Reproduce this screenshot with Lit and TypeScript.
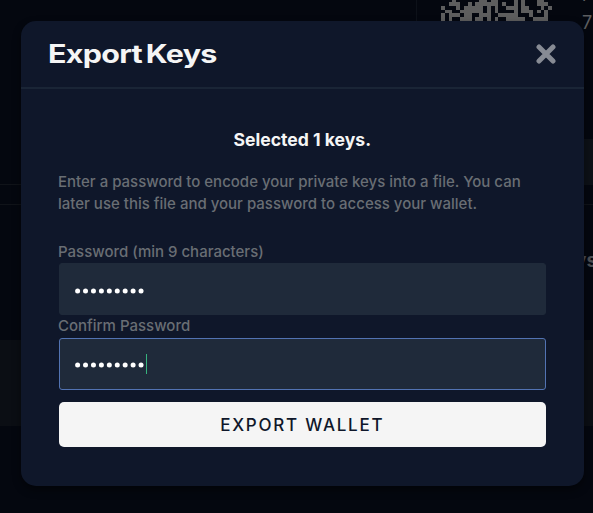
import { LitElement, html, css, svg } from "lit";
import { customElement } from "lit/decorators.js";

// Visible modules of the address QR code, one string per row.
const QR_ROWS = [
  "...#......##.##....#.#...##..",
  "..###..#.######.#..#.#...###.",
  "#...#.#####.#.#..###.##...#.#",
  ".##..######.#.#....#.###.#.#.",
  "#.###.##..###..#####...#...#.",
  "#.#..###.##.#.#..#####..####.",
];

@customElement("app-root")
export class AppRoot extends LitElement {
  static styles = css`
    :host { display: block; position: relative; width: 593px; height: 513px; overflow: hidden;
      background: #04070f; font-family: Inter, sans-serif; }
    * { box-sizing: border-box; }
    .behind { position: absolute; inset: 0; }
    .line { position: absolute; left: 0; right: 0; height: 1px; background: #101319; }
    .l1 { top: 184px; } .l2 { top: 204px; }
    .rule { position: absolute; left: 416px; top: 0; width: 1px; height: 184px; background: #0d1119; }
    .band { position: absolute; left: 0; right: 0; top: 340px; height: 86px; background: #0b0e14; }
    .chip { position: absolute; left: 560px; right: 0; top: 139px; height: 46px; background: #0d1117; }
    .qr { position: absolute; left: 441px; top: -2px; }
    .amount { position: absolute; left: 582px; font-size: 18px; line-height: 20px; color: #5c5d60; }
    .a1 { top: -15px; } .a2 { top: 13px; }
    .side { position: absolute; left: 575px; top: 250px; font-size: 19px; line-height: 22px; font-weight: 700; color: #4c4f54; }
    .dialog { position: absolute; left: 21px; top: 21px; width: 563px; height: 464.5px; border-radius: 15px;
      background: #0f172a; box-shadow: 0 4px 9px rgba(0,0,0,.45); }
    header { display: flex; align-items: center; justify-content: space-between; height: 68px;
      border-bottom: 2px solid #1a2536; padding: 0 28px 0 27px; }
    h1 { margin: 0; font-size: 25px; line-height: 30px; font-weight: 700; color: #f5f5f5; word-spacing: -2.2px;
      letter-spacing: -0.6px; transform: scaleX(1.22); transform-origin: left; white-space: nowrap; }
    .close { display: block; margin-top: -1px; }
    .body { display: flex; flex-direction: column; padding: 39px 38px 0 37.5px; }
    .count { margin: 0 0 19px; text-align: center; font-size: 17.6px; line-height: 24px; font-weight: 700; color: #f5f5f5; }
    .hint { margin: 0 0 26px -0.5px; font-size: 15px; line-height: 22px; font-weight: 500; color: #696e74; white-space: nowrap; }
    label { margin-left: -0.5px; font-size: 15px; line-height: 22px; font-weight: 500; color: #696e74; }
    .field { display: flex; align-items: center; height: 52px; padding: 4px 16px 0 15.5px; border-radius: 3px;
      border: 1px solid #1f2a3a; background: #1f2a3a; }
    .focused { border-color: #5273b3; margin-top: 1px; padding-top: 0; }
    .focused .dots { margin-top: 2px; }
    .caret { width: 1px; height: 20px; background: #36b37e; }
    button { margin-top: 12px; height: 45px; border: 0; border-radius: 5px; background: #f5f5f5; color: #0f172a;
      font: 500 17px/24px Inter, sans-serif; letter-spacing: 1.75px; padding: 0; }
  `;

  private qr() {
    return html`<svg class="qr" width="111" height="23" viewBox="0 0 29 6" preserveAspectRatio="none" shape-rendering="crispEdges">
      ${QR_ROWS.flatMap((row, y) => [...row].map((c, x) =>
        c === "#" ? svg`<rect x=${x} y=${y} width="1" height="1" fill="#5e5e5e"></rect>` : null))}
    </svg>`;
  }

  private dots() {
    return html`<svg class="dots" width="71" height="8" viewBox="0 0 71 8">
      ${Array.from({ length: 9 }, (_, i) => svg`<circle cx=${2.6 + i * 7.93} cy="4" r="2.5" fill="#fff"></circle>`)}
    </svg>`;
  }

  render() {
    return html`
      <div class="behind">
        <div class="rule"></div><div class="line l1"></div><div class="line l2"></div>
        <div class="band"></div><div class="chip"></div>
        ${this.qr()}
        <span class="amount a1">r</span><span class="amount a2">7</span>
        <span class="side">ys</span>
      </div>
      <section class="dialog">
        <header>
          <h1>Export Keys</h1>
          <svg class="close" width="20" height="20" viewBox="0 0 20 20">
            <path d="M3 3L17 17M17 3L3 17" stroke="#878b94" stroke-width="5" stroke-linecap="round"></path>
          </svg>
        </header>
        <div class="body">
          <p class="count">Selected 1 keys.</p>
          <p class="hint">Enter a password to encode your private keys into a file. You can<br>later use this file and your password to access your wallet.</p>
          <label>Password (min 9 characters)</label>
          <div class="field">${this.dots()}</div>
          <label>Confirm Password</label>
          <div class="field focused">${this.dots()}<span class="caret"></span></div>
          <button>EXPORT WALLET</button>
        </div>
      </section>`;
  }
}
